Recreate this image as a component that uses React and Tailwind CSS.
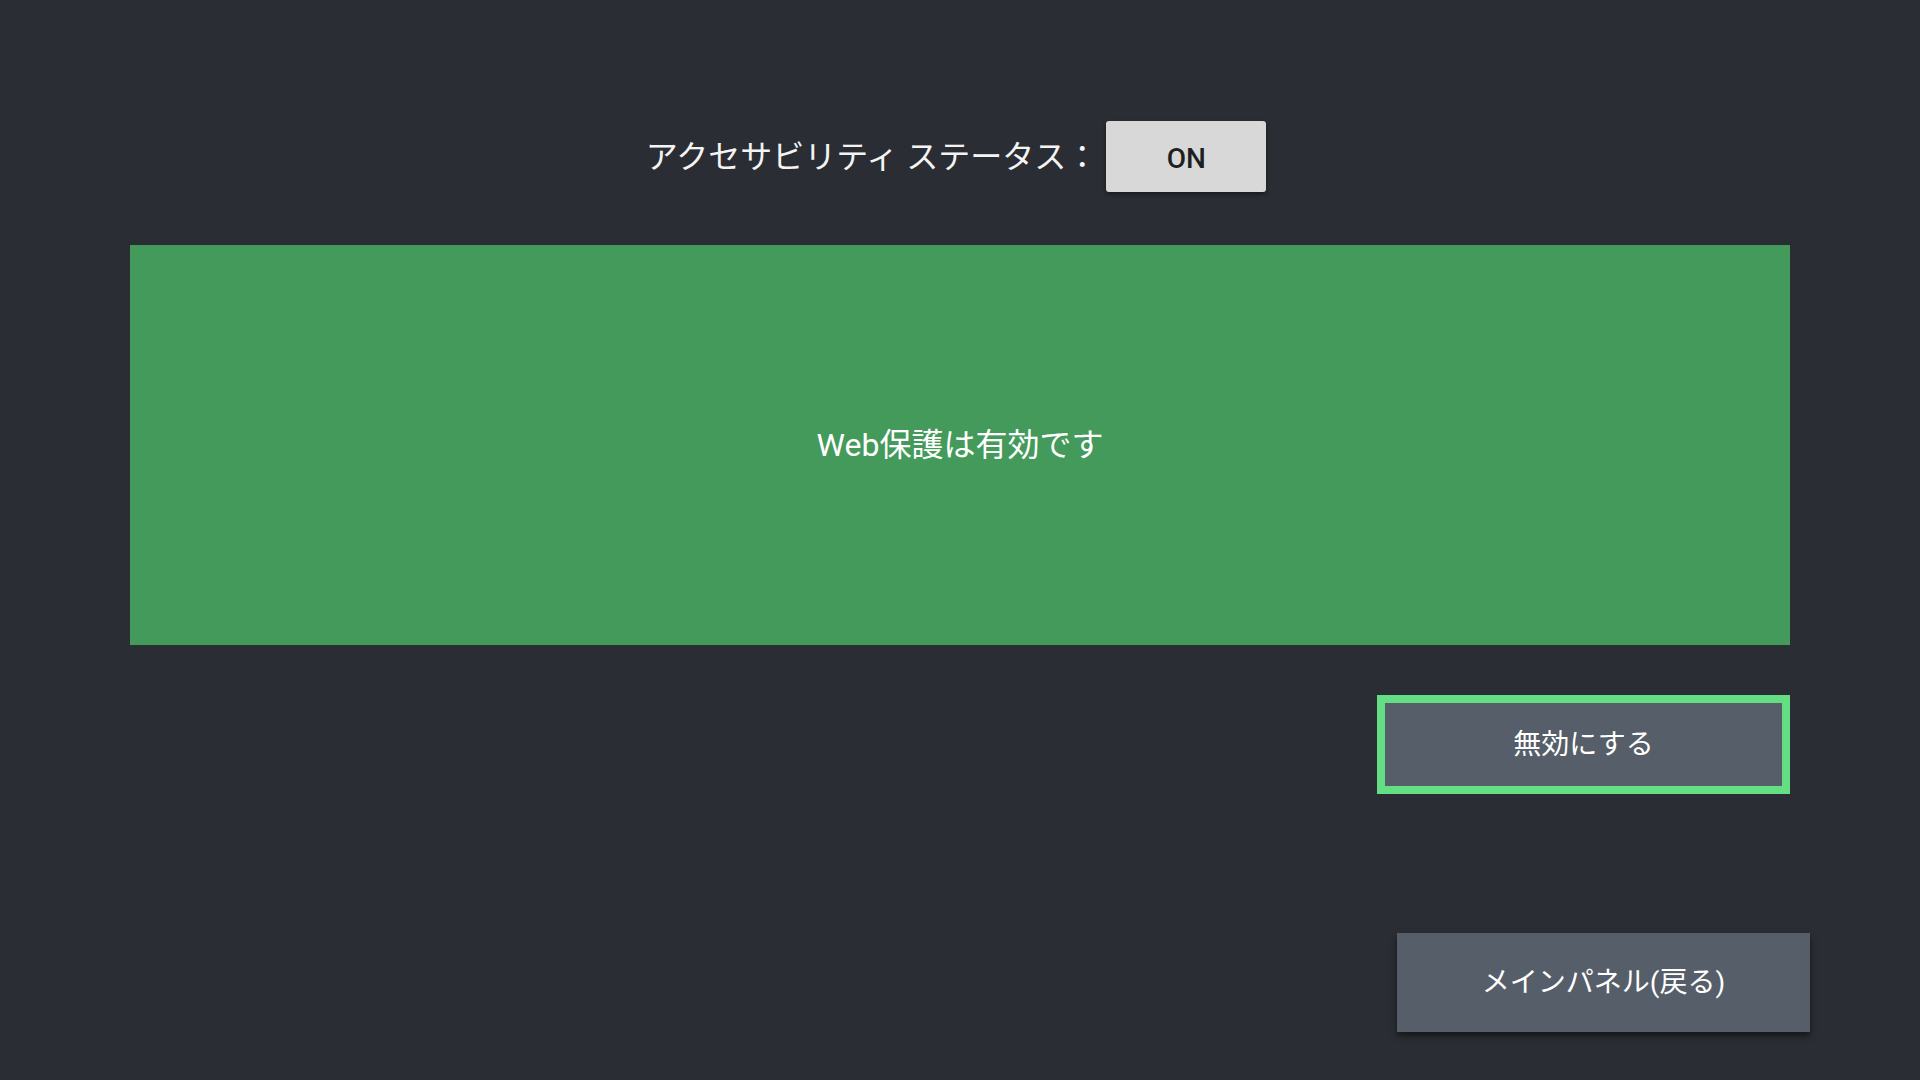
import React from 'react'

// TV設定画面: アクセシビリティの状態とWeb保護パネル
const font = { fontFamily: "Roboto, 'Noto Sans CJK JP', sans-serif" }

export default function App() {
  return (
    <div
      className="flex h-[1080px] w-[1920px] flex-col bg-[#2a2d33] text-white"
      style={font}
    >
      <div className="flex items-center justify-center gap-[8px] pr-[8px] pt-[121px]">
        <span className="text-[32px] leading-none text-[#f4f4f4]">
          アクセサビリティ ステータス：
        </span>
        <div className="flex h-[71px] w-[160px] items-center justify-center rounded-[3px] bg-[#d7d8d7] pt-[4px] shadow-[0_2px_4px_rgba(0,0,0,0.45)]">
          <span className="text-[28px] font-medium text-[#1f1f1f]">ON</span>
        </div>
      </div>

      <div className="mx-[130px] mt-[53px] flex h-[400px] items-center justify-center bg-[#439a5b]">
        <span className="text-[32px] text-white">Web保護は有効です</span>
      </div>

      <div className="flex justify-end pr-[130px] pt-[50px]">
        <div className="flex h-[99px] w-[413px] items-center justify-center border-[8px] border-[#64de83] bg-[#565e69]">
          <span className="text-[28px] text-white">無効にする</span>
        </div>
      </div>

      <div className="flex justify-end pr-[110px] pt-[139px]">
        <div className="flex h-[99px] w-[413px] items-center justify-center bg-[#565e69] shadow-[0_4px_6px_rgba(0,0,0,0.5)]">
          <span className="text-[28px] text-white">メインパネル(戻る)</span>
        </div>
      </div>
    </div>
  )
}
